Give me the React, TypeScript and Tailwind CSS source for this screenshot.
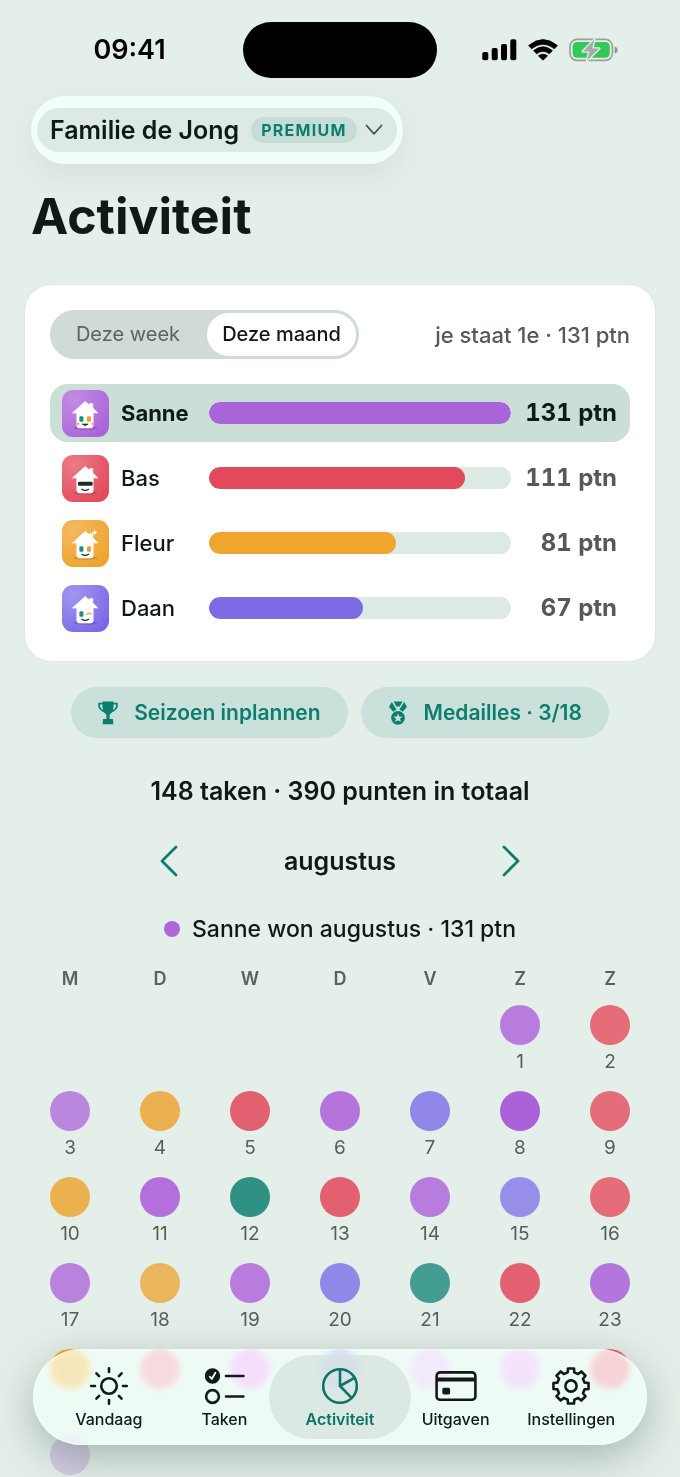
import type { ReactNode } from "react";

type Member = {
  name: string;
  points: number;
  bar: string;
  avatar: [string, string];
  face: "smile" | "shades" | "sparkle" | "wink";
};

const members: Member[] = [
  { name: "Sanne", points: 131, bar: "bg-[#a964d9]", avatar: ["#c48be4", "#a963d8"], face: "smile" },
  { name: "Bas", points: 111, bar: "bg-[#e2495a]", avatar: ["#ec7a86", "#e24a5b"], face: "shades" },
  { name: "Fleur", points: 81, bar: "bg-[#f0a52c]", avatar: ["#f2b95f", "#f0a32c"], face: "sparkle" },
  { name: "Daan", points: 67, bar: "bg-[#7b6ce6]", avatar: ["#a196ee", "#7868e5"], face: "wink" },
];

const maxPoints = 131;

const weekdays = ["M", "D", "W", "D", "V", "Z", "Z"];

// 1 augustus valt op een zaterdag
const leadingBlanks = 5;

// days from here on sit under the tab bar and carry no visible number
const firstCoveredDay = 24;

const days = [
  "bg-[#b77cdd]", "bg-[#e56c79]",
  "bg-[#bb87de]", "bg-[#edb04e]", "bg-[#e2606f]", "bg-[#b573dc]", "bg-[#9087e8]", "bg-[#ab62d9]", "bg-[#e56c79]",
  "bg-[#edb04e]", "bg-[#b370dc]", "bg-[#2e9183]", "bg-[#e2606f]", "bg-[#b77cdd]", "bg-[#968ee8]", "bg-[#e56c79]",
  "bg-[#b982dd]", "bg-[#ebb55e]", "bg-[#b77cdd]", "bg-[#9089e8]", "bg-[#449d92]", "bg-[#e2606f]", "bg-[#b476dc]",
  "bg-[#f2a52e]", "bg-[#f87f92]", "bg-[#e78bf7]", "bg-[#8f86f0]", "bg-[#e2aef7]", "bg-[#df9cf7]", "bg-[#ee6276]",
  "bg-[#d3cbe0]",
];

function HouseAvatar({ member }: { member: Member }) {
  const id = `avatar-${member.name}`;
  const { face } = member;
  return (
    <svg viewBox="0 0 47 47" className="size-[47px] shrink-0" aria-hidden="true">
      <defs>
        <radialGradient id={id} cx="0.25" cy="0.2" r="0.95">
          <stop offset="0" stopColor={member.avatar[0]} />
          <stop offset="1" stopColor={member.avatar[1]} />
        </radialGradient>
      </defs>
      <rect width="47" height="47" rx="11" fill={`url(#${id})`} />
      <ellipse cx="23.5" cy="38" rx="12" ry="1.8" fill="#000" opacity="0.14" />
      <path
        d="M23.2 11.4 27.6 15.2V13.6H30.8V18L36 23H31.2V35.2Q31.2 38 28.4 38H17.6Q14.8 38 14.8 35.2V23H10.4Z"
        fill="#fff"
        stroke="#fff"
        strokeWidth="0.6"
        strokeLinejoin="round"
      />
      {face === "shades" ? (
        <rect x="16" y="26.8" width="14.6" height="4" rx="1.2" fill="#1c2b2b" />
      ) : (
        <rect x="17.4" y="26.2" width="4" height="5.6" rx="1.2" fill="#16907f" />
      )}
      {(face === "smile" || face === "sparkle") && (
        <rect x="25" y="26.2" width="4" height="5.6" rx="1.2" fill="#efa12a" />
      )}
      {face === "wink" && (
        <path d="M24.6 29.4Q27 27 29.4 29.4" fill="none" stroke="#efa12a" strokeWidth="1.2" strokeLinecap="round" />
      )}
      {face === "smile" && (
        <>
          <circle cx="16" cy="33.8" r="1.5" fill="#f6a9a0" />
          <circle cx="30.6" cy="33.8" r="1.5" fill="#f6a9a0" />
          <path d="M20.2 34H26.2Q23.2 37 20.2 34Z" fill="#1c2b2b" stroke="#1c2b2b" strokeWidth="0.6" />
        </>
      )}
      {face !== "smile" && (
        <path d="M19.8 34.2Q23.2 36.6 26.6 34.2" fill="none" stroke="#1c2b2b" strokeWidth="1.1" strokeLinecap="round" />
      )}
      {face === "sparkle" && (
        <path d="M32.6 9.6 33.4 11.8 35.6 12.6 33.4 13.4 32.6 15.6 31.8 13.4 29.6 12.6 31.8 11.8Z" fill="#fff" />
      )}
    </svg>
  );
}

function StatusBar() {
  return (
    <div className="grid grid-cols-[1fr_194px_1fr] items-center pt-[22px] text-black">
      <span className="pl-4 text-center text-[27px] leading-8 font-semibold">09:41</span>
      <div className="h-14 rounded-full bg-black" />
      <div className="flex items-center justify-center gap-[11px] pr-[18px]">
        <svg viewBox="0 0 35 22" className="h-[22px] w-[35px]" aria-hidden="true">
          <rect x="0.3" y="13" width="6" height="8.3" rx="1.8" />
          <rect x="9.7" y="9" width="6" height="12.3" rx="1.8" />
          <rect x="19" y="5" width="6" height="16.3" rx="1.8" />
          <rect x="28.3" y="0.3" width="6" height="21" rx="1.8" />
        </svg>
        <svg viewBox="0 0 30 22" className="h-[22px] w-[30px]" aria-hidden="true">
          <path d="M0.6 6.6Q15-5.4 29.4 6.6L26.4 9.8Q15 0.6 3.6 9.8Z" strokeWidth="0.8" stroke="#000" strokeLinejoin="round" />
          <path d="M5.6 11.6Q15 4 24.4 11.6L21.4 14.8Q15 9.8 8.6 14.8Z" strokeWidth="0.8" stroke="#000" strokeLinejoin="round" />
          <path d="M10.4 16.8Q15 13.6 19.6 16.8L15 21.2Z" strokeWidth="0.8" stroke="#000" strokeLinejoin="round" />
        </svg>
        <svg viewBox="0 0 49 24" className="h-6 w-[49px]" aria-hidden="true">
          <rect x="1" y="1.4" width="42.4" height="21" rx="7" fill="none" stroke="#999f9b" strokeWidth="1.6" />
          <rect x="3.6" y="4" width="37.2" height="15.8" rx="4.4" fill="#34c759" />
          <path d="M45.6 8.4Q48.6 9.4 48.6 12T45.6 15.6Z" fill="#8e9490" />
          <path
            d="M25.4 1.6 13.8 13.4H20.6L18 22.6 30.2 10.6H23.2Z"
            fill="#a4aaa7"
            stroke="#e5efe9"
            strokeWidth="2.6"
            strokeLinejoin="round"
            paintOrder="stroke"
          />
        </svg>
      </div>
    </div>
  );
}

function TrophyIcon() {
  return (
    <svg viewBox="0 0 20 24" className="h-6 w-5 overflow-visible" fill="currentColor" aria-hidden="true">
      <path d="M4.4 0.6H15.6V4Q15.6 11.6 11.6 13.6V18H14.4Q15.2 18 15.2 18.8V23.2H4.8V18.8Q4.8 18 5.6 18H8.4V13.6Q4.4 11.6 4.4 4Z" />
      <path
        d="M4.6 2.6H1Q0.6 8.6 6.4 10.4M15.4 2.6H19Q19.4 8.6 13.6 10.4"
        fill="none"
        stroke="currentColor"
        strokeWidth="1.7"
        strokeLinecap="round"
      />
    </svg>
  );
}

function MedalIcon() {
  return (
    <svg viewBox="0 0 20 24" className="h-6 w-5 overflow-visible" fill="currentColor" aria-hidden="true">
      <path d="M5.6 0.6H14.6L11.8 5.6H8.4Z" />
      <path d="M3.8 1 8.6 8.6 5.2 10.8 1 5.8Z" />
      <path d="M16.2 1 11.4 8.6 14.8 10.8 19 5.8Z" />
      <circle cx="10" cy="16.8" r="6.9" />
      <path
        d="M10 12.4 11.2 15.6 14.6 15.7 12 17.8 12.9 21 10 19.2 7.1 21 8 17.8 5.4 15.7 8.8 15.6Z"
        fill="#c9e1da"
      />
    </svg>
  );
}

function Chevron({ d }: { d: string }) {
  return (
    <svg viewBox="0 0 20 32" className="h-8 w-5" fill="none" stroke="#0d7d6f" strokeWidth="2.8" strokeLinecap="round" strokeLinejoin="round" aria-hidden="true">
      <path d={d} />
    </svg>
  );
}

const gearPath = Array.from({ length: 8 }, (_, i) => {
  const center = (i * Math.PI) / 4;
  const corners: [number, number][] = [
    [14, -0.24],
    [17.8, -0.17],
    [17.8, 0.17],
    [14, 0.24],
  ];
  return corners
    .map(([r, offset]) => {
      const x = 21 + r * Math.sin(center + offset);
      const y = 21 - r * Math.cos(center + offset);
      return `${x.toFixed(2)} ${y.toFixed(2)}`;
    })
    .join("L");
}).join("L");

const tabs: { label: string; active?: boolean; icon: ReactNode }[] = [
  {
    label: "Vandaag",
    icon: (
      <>
        <circle cx="21" cy="21" r="7.8" />
        <path d="M21 3.2V7M21 35V38.8M3.2 21H7M35 21H38.8M8.4 8.4 11.1 11.1M30.9 30.9 33.6 33.6M33.6 8.4 30.9 11.1M11.1 30.9 8.4 33.6" />
      </>
    ),
  },
  {
    label: "Taken",
    icon: (
      <>
        <circle cx="9.5" cy="11" r="6.4" fill="currentColor" />
        <path d="M6.8 11.6 8.8 14 12.4 7.8" stroke="#f0fdf6" strokeWidth="1.8" />
        <circle cx="9.5" cy="31.5" r="6.4" />
        <path d="M23 11H40.4M23 31.5H40.4" />
      </>
    ),
  },
  {
    label: "Activiteit",
    active: true,
    icon: (
      <>
        <circle cx="21" cy="21" r="16.8" />
        <path d="M21 4.2V21L35.5 12.8M21 21 32.6 32.8" />
      </>
    ),
  },
  {
    label: "Uitgaven",
    icon: (
      <>
        <rect x="1.6" y="7.4" width="38.8" height="27.4" rx="3.6" />
        <path d="M2 14.6H40" strokeWidth="4" strokeLinecap="butt" />
        <rect x="8" y="23.4" width="6.4" height="5.4" rx="1" fill="currentColor" strokeWidth="1.4" />
      </>
    ),
  },
  {
    label: "Instellingen",
    icon: (
      <>
        <path d={`M${gearPath}Z`} />
        <circle cx="21" cy="21" r="5.6" />
      </>
    ),
  },
];

function Leaderboard() {
  return (
    <section className="mx-[25px] mt-[39px] rounded-[26px] bg-white px-[25px] pt-[25px] pb-6 shadow-[0_0_2px_rgba(20,60,45,0.12)]">
      <div className="flex items-center justify-between">
        <div className="flex rounded-full bg-[#d0dbd6] p-[3px]">
          <button className="w-[154px] rounded-full pr-1 text-[20px] leading-[43px] text-[#5b6461]">Deze week</button>
          <button className="w-[149px] rounded-full bg-white text-[20px] leading-[43px] font-medium text-[#111817]">
            Deze maand
          </button>
        </div>
        <p className="text-[22px] leading-7 font-medium text-[#55595b]">je staat 1e · 131 ptn</p>
      </div>

      <ul className="mt-[25px] flex flex-col gap-[7px]">
        {members.map((member, index) => (
          <li
            key={member.name}
            className={`flex h-[58px] items-center rounded-[18px] pr-[13px] pl-3 text-[22px] ${index === 0 ? "bg-[#cbdfd6]" : ""}`}
          >
            <HouseAvatar member={member} />
            <span className={`ml-3 w-[88px] shrink-0 text-[#0f1a18] ${index === 0 ? "font-bold" : "font-medium"}`}>
              {member.name}
            </span>
            <div className="h-[22px] flex-1 overflow-hidden rounded-full bg-[#dde9e3]">
              <div
                className={`h-full rounded-full ${member.bar}`}
                style={{ width: `${(member.points / maxPoints) * 100}%` }}
              />
            </div>
            <span
              className={`w-[106px] shrink-0 text-right text-[24px] font-bold tabular-nums ${index === 0 ? "text-[#0c1c18]" : "text-[#55595b]"}`}
            >
              {member.points} ptn
            </span>
          </li>
        ))}
      </ul>
    </section>
  );
}

function Calendar() {
  return (
    <section className="px-[25px]">
      <div className="mt-[23px] grid grid-cols-7 text-center text-[18px] leading-6 font-semibold text-[#59625f]">
        {weekdays.map((day, index) => (
          <span key={index}>{day}</span>
        ))}
      </div>
      <div className="mt-[14px] grid grid-cols-7 gap-y-[17px]">
        {Array.from({ length: leadingBlanks }, (_, index) => (
          <span key={`blank-${index}`} />
        ))}
        {days.map((color, index) => (
          <div key={index} className="flex flex-col items-center gap-[5px]">
            <span className={`size-10 rounded-full ${color}`} />
            <span className="h-6 text-[19px] leading-6 text-[#555e5b]">
              {index + 1 < firstCoveredDay && index + 1}
            </span>
          </div>
        ))}
      </div>
    </section>
  );
}

function TabBar() {
  return (
    <nav className="fixed inset-x-[33px] bottom-8 grid grid-cols-5 rounded-full bg-[#f2fff9]/75 px-[18px] py-[6px] shadow-[0_12px_44px_rgba(40,70,60,0.34),inset_0_0_3px_rgba(255,255,255,0.9)] backdrop-blur-[3px] backdrop-saturate-150">
      {tabs.map((tab) => (
        <a
          key={tab.label}
          href="#"
          className={`flex flex-col items-center rounded-full pt-[6px] pb-[9px] text-[16px] leading-[22px] ${
            tab.active ? "-mx-[13px] bg-[#d5e2dd]/75 font-semibold text-[#0b7467]" : "font-medium text-[#111a18]"
          }`}
        >
          <svg
            viewBox="0 0 42 42"
            className="-mb-[3px] h-[50px] w-[42px]"
            fill="none"
            stroke="currentColor"
            strokeWidth="2.6"
            strokeLinecap="round"
            strokeLinejoin="round"
            aria-hidden="true"
          >
            {tab.icon}
          </svg>
          {tab.label}
        </a>
      ))}
    </nav>
  );
}

export default function App() {
  return (
    <div className="h-screen overflow-y-auto bg-[#e5efe9] font-['Inter',sans-serif] text-[#0f1a18] [scrollbar-width:none]">
      <StatusBar />

      <header className="mt-[18px] px-[31px]">
        <button className="flex rounded-full bg-[#f0fff8] px-[6px] py-3 shadow-[0_12px_32px_rgba(40,70,60,0.08)]">
          <span className="flex h-11 items-center rounded-full bg-[#dde9e3] pr-[14px] pl-[13px]">
            <span className="text-[25px] leading-8 font-semibold">Familie de Jong</span>
            <span className="ml-3 rounded-full bg-[#c5ddd6] px-[10px] text-[16px] leading-[26px] font-bold tracking-[0.08em] text-[#0d7d6f]">
              PREMIUM
            </span>
            <svg viewBox="0 0 18 12" className="ml-2 h-3 w-[18px]" fill="none" stroke="#4a5552" strokeWidth="1.8" strokeLinecap="round" strokeLinejoin="round" aria-hidden="true">
              <path d="M1.5 1.5 9 9.8 16.5 1.5" />
            </svg>
          </span>
        </button>
        <h1 className="mt-[22px] text-[50px] leading-[60px] font-bold">Activiteit</h1>
      </header>

      <Leaderboard />

      <div className="mt-[26px] flex justify-center gap-[13px] text-[21px] leading-[51px] font-semibold text-[#0d7d6f]">
        <button className="flex items-center gap-4 rounded-full bg-[#c9e1da] px-[27px]">
          <TrophyIcon />
          Seizoen inplannen
        </button>
        <button className="flex items-center gap-4 rounded-full bg-[#c9e1da] px-[27px]">
          <MedalIcon />
          Medailles · 3/18
        </button>
      </div>

      <p className="mt-9 text-center text-[25px] leading-[34px] font-semibold">148 taken · 390 punten in totaal</p>

      <div className="mx-auto mt-9 flex w-[364px] items-center justify-between">
        <button aria-label="Vorige maand">
          <Chevron d="M18 2 4 16 18 30" />
        </button>
        <h2 className="text-[25px] leading-[34px] font-semibold">augustus</h2>
        <button aria-label="Volgende maand">
          <Chevron d="M2 2 16 16 2 30" />
        </button>
      </div>

      <p className="mt-9 flex items-center justify-center gap-3 text-[23px] leading-[30px] font-medium">
        <span className="size-4 rounded-full bg-[#ac66da]" />
        Sanne won augustus · 131 ptn
      </p>

      <Calendar />
      <TabBar />
    </div>
  );
}
